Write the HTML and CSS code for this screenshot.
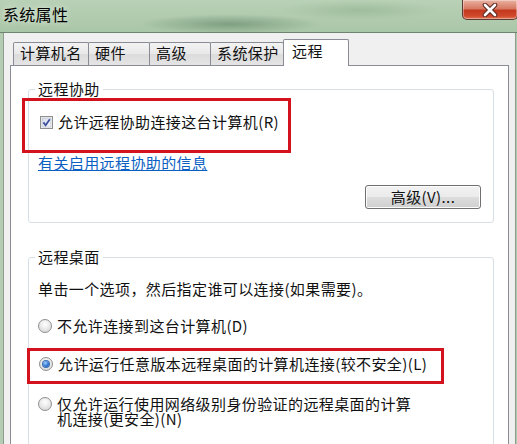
FILE: index.html
```html
<!DOCTYPE html>
<html lang="zh-CN">
<head>
<meta charset="utf-8">
<title>系统属性</title>
<link rel="stylesheet" href="styles.css">
</head>
<body>
<div class="window">
  <div class="titlebar">
    <span class="title">系统属性</span>
    <div class="close">
      <svg width="22" height="14" viewBox="0 0 22 14">
        <path d="M6 2 L16 12 M16 2 L6 12" stroke="#5a2a22" stroke-width="4.6" stroke-linecap="round"/>
        <path d="M6 2 L16 12 M16 2 L6 12" stroke="#ffffff" stroke-width="2.6" stroke-linecap="round"/>
      </svg>
    </div>
  </div>
  <div class="body">
    <div class="tabs">
      <div class="tab w1">计算机名</div>
      <div class="tab w2">硬件</div>
      <div class="tab w3">高级</div>
      <div class="tab w4">系统保护</div>
      <div class="tab active">远程</div>
    </div>
    <div class="panel">
      <fieldset class="group g1">
        <legend>远程协助</legend>
        <label class="row check-row">
          <span class="checkbox">
            <svg width="13" height="13" viewBox="0 0 13 13">
              <defs>
                <linearGradient id="cb" x1="0" y1="0" x2="1" y2="1">
                  <stop offset="0" stop-color="#d6dbe6"/>
                  <stop offset="1" stop-color="#f4f6fa"/>
                </linearGradient>
              </defs>
              <rect x="0.5" y="0.5" width="12" height="12" fill="#f6f6f6" stroke="#8e8f8f"/>
              <rect x="2" y="2" width="9" height="9" fill="url(#cb)" stroke="#b5bbc6" stroke-width="0.6"/>
              <path d="M3.4 6.4 L5.6 9.2 L9.8 3.2" fill="none" stroke="#3b4f9e" stroke-width="1.7"/>
            </svg>
          </span>
          <span>允许远程协助连接这台计算机(R)</span>
        </label>
        <a class="link" href="#">有关启用远程协助的信息</a>
        <button class="btn">高级(V)...</button>
      </fieldset>

      <fieldset class="group g2">
        <legend>远程桌面</legend>
        <p class="desc">单击一个选项，然后指定谁可以连接(如果需要)。</p>
        <label class="row radio-row r1">
          <span class="radio"></span>
          <span>不允许连接到这台计算机(D)</span>
        </label>
        <label class="row radio-row r2">
          <span class="radio on"></span>
          <span>允许运行任意版本远程桌面的计算机连接(较不安全)(L)</span>
        </label>
        <label class="row radio-row r3">
          <span class="radio"></span>
          <span class="wrap">仅允许运行使用网络级别身份验证的远程桌面的计算机连接(更安全)(N)</span>
        </label>
      </fieldset>
    </div>
  </div>
  <div class="mark m1"></div>
  <div class="mark m2"></div>
</div>
</body>
</html>
```

FILE: styles.css
```css
* { box-sizing: border-box; }
html, body { margin: 0; padding: 0; }
body {
  font-family: "Noto Sans CJK SC", "Liberation Sans", sans-serif;
  font-size: 15px;
  color: #111;
  background: #a9c3a7;
}
.window {
  position: relative;
  width: 517px;
  height: 444px;
  overflow: hidden;
  background: linear-gradient(to right, #b4ccb2, #adc8ab 40%, #b0caae);
}
.titlebar {
  height: 33px;
  display: flex;
  justify-content: space-between;
  align-items: flex-start;
  border-bottom: 1px solid #6f8571;
  background:
    radial-gradient(ellipse 90px 10px at 230px 24px, rgba(70,110,80,0.45), rgba(70,110,80,0) 100%),
    radial-gradient(ellipse 80px 10px at 360px 10px, rgba(120,160,120,0.35), rgba(120,160,120,0) 100%),
    linear-gradient(to bottom, #b9d1b6, #aac6a8);
}
.title {
  padding: 4px 0 0 3px;
  font-size: 16px;
  line-height: 20px;
  letter-spacing: 0.3px;
  color: #000;
  text-shadow: 0 0 6px rgba(255,255,255,0.8);
}
.close {
  width: 56px;
  height: 20px;
  margin-right: -1px;
  border: 1px solid #5b3b33;
  border-top: none;
  border-radius: 0 0 5px 5px;
  background: linear-gradient(to bottom, #e9b2a2 0%, #d77a63 45%, #c3391f 55%, #d1492d 85%, #e07a58 100%);
  display: flex;
  align-items: center;
  justify-content: center;
  box-shadow: inset 0 0 0 1px rgba(255,255,255,0.35);
}
.body {
  margin-left: 3px;
  width: 513px;
  height: 411px;
  border-left: 1px solid #8c9d8d;
  border-right: 1px solid #8c9d8d;
  background: #f0f0f0;
  padding: 6px 0 0 6px;
}
.tabs {
  display: flex;
  align-items: flex-end;
  margin-left: 3px;
  height: 27px;
  position: relative;
  z-index: 1;
}
.tab {
  height: 23px;
  border: 1px solid #898c95;
  border-bottom: none;
  border-radius: 2px 2px 0 0;
  background: linear-gradient(to bottom, #f3f3f3, #e8e8e8 50%, #dcdcdc 51%, #e4e4e4);
  padding-left: 6px;
  line-height: 20px;
  letter-spacing: 0.4px;
  margin-bottom: 1px;
}
.w1 { width: 76px; }
.w2 { width: 62px; margin-left: -1px; }
.w3 { width: 62px; margin-left: -1px; }
.w4 { width: 74px; margin-left: -1px; }
.tab.active {
  width: 66px;
  height: 27px;
  margin-left: -1px;
  margin-bottom: 0;
  background: #fff;
  padding-left: 8px;
  line-height: 22px;
}
.panel {
  width: 499px;
  height: 380px;
  margin-top: -1px;
  border: 1px solid #898c95;
  background: #fff;
  padding: 14px 14px 0 17px;
}
.group {
  margin: 0;
  border: 1px solid #d5dfe5;
  border-radius: 3px;
  padding: 0 12px 0 6px;
  display: flex;
  flex-direction: column;
  align-items: flex-start;
  min-width: 0;
}
.group legend {
  padding: 0 3px;
  line-height: 18px;
  letter-spacing: 0.4px;
}
.row {
  display: flex;
  align-items: center;
  line-height: 18px;
  letter-spacing: 0.4px;
}
.check-row { margin-top: 15px; margin-left: 5px; gap: 5px; }
.checkbox { width: 13px; height: 13px; display: block; }
.checkbox svg { display: block; }
.link {
  margin-top: 23px;
  margin-left: 3px;
  color: #0b5fc2;
  line-height: 18px;
  letter-spacing: 0.4px;
}
.btn {
  align-self: flex-end;
  margin-top: 13px;
  margin-right: 0;
  margin-bottom: 13px;
  width: 116px;
  height: 24px;
  border: 1px solid #707070;
  border-radius: 3px;
  background: linear-gradient(to bottom, #f2f2f2, #ebebeb 50%, #dddddd 51%, #cfcfcf);
  box-shadow: inset 0 0 0 1px #fcfcfc;
  font-family: inherit;
  font-size: 15px;
  line-height: 18px;
  letter-spacing: 0.4px;
  color: #111;
  padding: 0;
}
.g2 { margin-top: 25px; height: 200px; }
.desc {
  margin: 14px 0 0 3px;
  line-height: 18px;
  letter-spacing: 0.4px;
}
.radio-row { gap: 5px; margin-left: 3px; }
.r1 { margin-top: 19px; }
.r2 { margin-top: 20px; margin-left: 4px; }
.r3 { margin-top: 23px; align-items: flex-start; }
.radio {
  width: 14px;
  height: 14px;
  border-radius: 50%;
  border: 1px solid #8f8f8f;
  background: radial-gradient(circle at 50% 35%, #ffffff, #e4e4e4 60%, #cfcfcf);
  display: block;
  flex: none;
  position: relative;
}
.radio.on::after {
  content: "";
  position: absolute;
  left: 3px; top: 3px;
  width: 6px; height: 6px;
  border-radius: 50%;
  background: radial-gradient(circle at 40% 35%, #a7d3ff, #2b74d0 55%, #16479a);
  box-shadow: 0 0 0 1px #3d6fb5;
}
.r3 .radio { margin-top: 1px; }
.wrap {
  width: 358px;
  line-height: 15px;
}
.mark {
  position: absolute;
  border: 3px solid #d3121d;
  pointer-events: none;
}
.m1 { left: 22px; top: 98px; width: 269px; height: 55px; }
.m2 { left: 27px; top: 348px; width: 417px; height: 36px; }
```
